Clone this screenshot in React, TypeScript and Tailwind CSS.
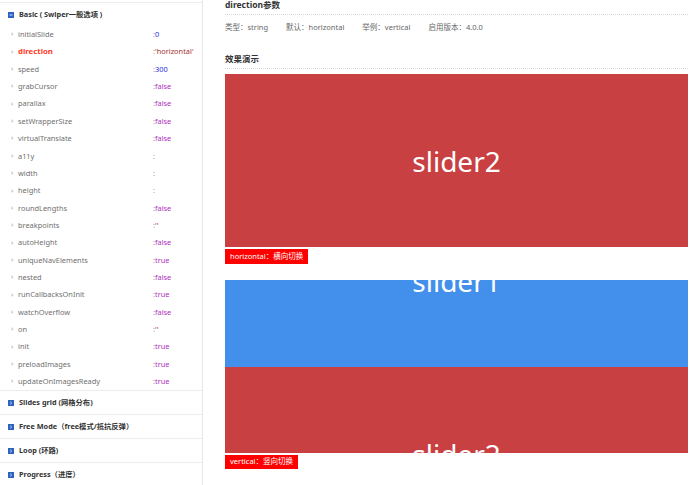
import React from 'react';

type Item = { name: string; value: string; kind: 'num' | 'str' | 'bool' | 'none' };

const items: Item[] = [
  { name: 'initialSlide', value: '0', kind: 'num' },
  { name: 'direction', value: "'horizontal'", kind: 'str' },
  { name: 'speed', value: '300', kind: 'num' },
  { name: 'grabCursor', value: 'false', kind: 'bool' },
  { name: 'parallax', value: 'false', kind: 'bool' },
  { name: 'setWrapperSize', value: 'false', kind: 'bool' },
  { name: 'virtualTranslate', value: 'false', kind: 'bool' },
  { name: 'a11y', value: '', kind: 'none' },
  { name: 'width', value: '', kind: 'none' },
  { name: 'height', value: '', kind: 'none' },
  { name: 'roundLengths', value: 'false', kind: 'bool' },
  { name: 'breakpoints', value: "''", kind: 'str' },
  { name: 'autoHeight', value: 'false', kind: 'bool' },
  { name: 'uniqueNavElements', value: 'true', kind: 'bool' },
  { name: 'nested', value: 'false', kind: 'bool' },
  { name: 'runCallbacksOnInit', value: 'true', kind: 'bool' },
  { name: 'watchOverflow', value: 'false', kind: 'bool' },
  { name: 'on', value: "''", kind: 'str' },
  { name: 'init', value: 'true', kind: 'bool' },
  { name: 'preloadImages', value: 'true', kind: 'bool' },
  { name: 'updateOnImagesReady', value: 'true', kind: 'bool' },
];

const sections = [
  'Slides grid (网格分布)',
  'Free Mode（free模式/抵抗反弹）',
  'Loop (环路)',
  'Progress（进度）',
];

const valueColor = {
  num: 'text-[#3030e0]',
  str: 'text-[#a83030]',
  bool: 'text-[#b030c0]',
  none: 'text-[#999]',
};

function SectionIcon({ open }: { open?: boolean }) {
  return (
    <svg width="6" height="6" viewBox="0 0 6 6" className="shrink-0">
      <rect width="6" height="6" fill="#2d62c0" />
      {open ? (
        <path d="M1.5 3 H4.5" stroke="#fff" strokeWidth="0.8" />
      ) : (
        <path d="M2.3 1.8 L3.6 3 L2.3 4.2" stroke="#fff" strokeWidth="0.8" fill="none" />
      )}
    </svg>
  );
}

function Slide({ color, label }: { color: string; label: string }) {
  return (
    <div className={`h-[173px] w-full flex items-center justify-center ${color}`}>
      <span className="text-white text-[28px] leading-none">{label}</span>
    </div>
  );
}

export default function App() {
  return (
    <div
      className="flex w-[697px] h-[485px] overflow-hidden bg-white"
      style={{ fontFamily: '"Noto Sans", "Noto Sans CJK SC", sans-serif' }}
    >
      {/* sidebar */}
      <div className="w-[203px] shrink-0 border-r border-[#e6e6e6]">
        <div className="mt-[2px] border-t border-[#ececec]">
          <div className="h-[23px] flex items-center gap-[5px] pl-[8px] text-[7.3px] font-bold text-[#333]">
            <SectionIcon open />
            <span>Basic ( Swiper一般选项 )</span>
          </div>
          {items.map((it) => (
            <div key={it.name} className="h-[17.35px] flex items-center text-[7.4px]">
              <span className="w-[18px] pl-[11px] text-[#999] text-[7px]">›</span>
              <span
                className={`w-[135px] ${
                  it.name === 'direction' ? 'text-[#ff3a1f] font-bold text-[7.8px]' : 'text-[#707070]'
                }`}
              >
                {it.name}
              </span>
              <span className="text-[#999]">:</span>
              <span className={valueColor[it.kind]}>{it.value}</span>
            </div>
          ))}
        </div>
        {sections.map((s) => (
          <div
            key={s}
            className="h-[24px] border-t border-[#ececec] flex items-center gap-[5px] pl-[8px] text-[7.3px] font-bold text-[#333]"
          >
            <SectionIcon />
            <span>{s}</span>
          </div>
        ))}
      </div>

      {/* main */}
      <div className="flex-1 pl-[22px] pr-[9px]">
        <div className="h-[15px] border-b border-dotted border-[#d8d8d8] text-[8.5px] font-bold text-[#333] leading-[10px]">
          direction参数
        </div>
        <div className="h-[26px] flex items-center gap-[18px] text-[7.5px] text-[#666]">
          <span>类型：string</span>
          <span>默认：horizontal</span>
          <span>举例：vertical</span>
          <span>启用版本：4.0.0</span>
        </div>
        <div className="h-[28px] border-b border-dotted border-[#d8d8d8] flex items-end pb-[4px] text-[8.5px] font-bold text-[#333] leading-[10px]">
          效果演示
        </div>
        <div className="mt-[5px]">
          <Slide color="bg-[#c94043]" label="slider2" />
        </div>
        <div className="mt-[2px] flex w-fit h-[15px] items-center px-[5px] bg-[#ff0000] text-white text-[7.5px]">
          horizontal：横向切换
        </div>
        <div className="mt-[16px] h-[173px] overflow-hidden">
          <div className="-translate-y-[86px]">
            <Slide color="bg-[#4390ec]" label="slider1" />
            <Slide color="bg-[#c94043]" label="slider2" />
          </div>
        </div>
        <div className="mt-[2px] flex w-fit h-[14px] items-center px-[5px] bg-[#ff0000] text-white text-[7.5px]">
          vertical：竖向切换
        </div>
      </div>
    </div>
  );
}
